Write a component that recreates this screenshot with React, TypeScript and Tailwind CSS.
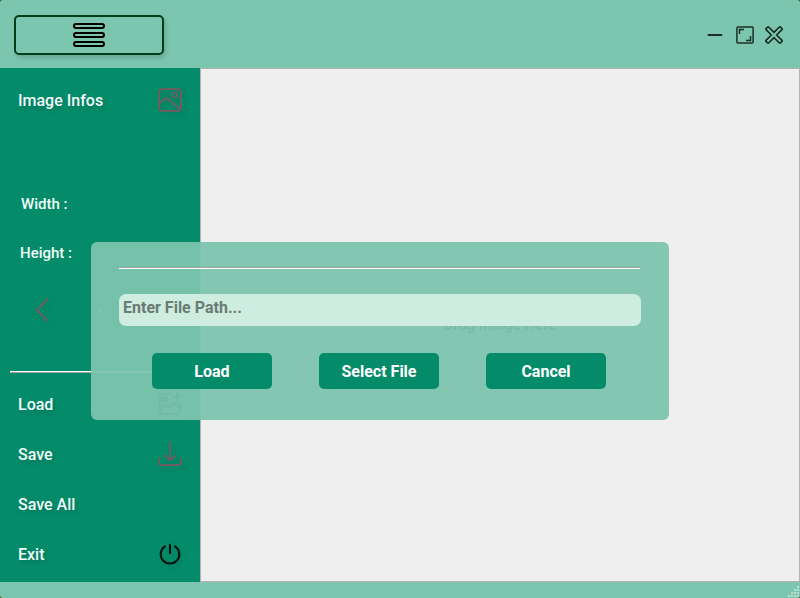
import React from "react";

const iconShadow = "drop-shadow-[2px_3px_3px_rgba(0,0,0,0.12)]";

function MenuIcon() {
  return (
    <svg width="34" height="26" viewBox="0 0 34 26" fill="none" stroke="#000" strokeWidth="2">
      <rect x="2" y="2" width="30" height="4" rx="2" />
      <rect x="2" y="11" width="30" height="4" rx="2" />
      <rect x="2" y="20" width="30" height="4" rx="2" />
    </svg>
  );
}

function PictureIcon() {
  return (
    <svg className={iconShadow} width="26" height="26" viewBox="0 0 26 26" fill="none" stroke="#6c5f62" strokeWidth="2">
      <rect x="2" y="2" width="22" height="22" rx="3.5" />
      <circle cx="17.5" cy="8" r="2.7" strokeWidth="1.8" />
      <path d="M2 17 L7 12.6 Q9.5 10.6 12 12.8 L23.5 22.5" />
    </svg>
  );
}

function AddPictureIcon() {
  return (
    <svg className={iconShadow} width="24" height="24" viewBox="0 0 24 24" fill="none" stroke="#000" strokeWidth="2">
      <path d="M13.5 2 H6 Q2 2 2 6 V18 Q2 22 6 22 H18 Q22 22 22 18 V11" />
      <circle cx="7" cy="7" r="2.2" />
      <path d="M2 17 L6 13.5 Q7.5 12.5 9 14 L11 16 L15 12 Q16.5 10.8 18 12 L22 16 M15 4.5 H23 M19 .5 V8.5" />
    </svg>
  );
}

function DownloadIcon() {
  return (
    <svg className={iconShadow} width="26" height="26" viewBox="0 0 26 26" fill="none" stroke="#6c5f62" strokeWidth="2" strokeLinecap="round">
      <path d="M13 1.5 V19 M7.8 14.7 L13 19.2 L18.2 14.7 M2 17.5 V22 Q2 24 4 24 H22 Q24 24 24 22 V17.5" />
    </svg>
  );
}

function PowerIcon() {
  return (
    <svg className={iconShadow} width="24" height="24" viewBox="0 0 24 24" fill="none" stroke="#03110d" strokeWidth="2.1" strokeLinecap="round">
      <path d="M12 2.7 V11 M7 4.4 A9.3 9.3 0 1 0 17 4.4" />
    </svg>
  );
}

function MenuRow({ label, icon }: { label: string; icon?: React.ReactNode }) {
  return (
    <div className="flex h-[50px] items-center justify-between pl-[18px] text-[16px]">
      <span className="pt-[2px] [text-shadow:2px_3px_4px_rgba(0,0,0,0.15)]">{label}</span>
      <span className="flex w-[60px] items-center justify-center">{icon}</span>
    </div>
  );
}

function Header() {
  return (
    <header className="flex h-[68px] items-start justify-between pl-[14px] pr-[17px] pt-[15px]">
      <button className="flex h-[40px] w-[150px] items-center justify-center rounded-[5px] border-2 border-[#003d1b] bg-[#7cc5ae] shadow-[2px_3px_4px_rgba(0,0,0,0.14)]">
        <MenuIcon />
      </button>
      <div className="flex h-[40px] items-center">
        <svg width="16" height="4" viewBox="0 0 16 4">
          <rect x=".5" y="1" width="15" height="2" rx="1" fill="#1a2d26" />
        </svg>
        <svg className="ml-[13px]" width="18" height="18" viewBox="0 0 18 18" fill="none" stroke="#1c3029" strokeWidth="1.5">
          <rect x=".9" y=".9" width="16.2" height="16.2" rx="1" />
          <path d="M3.5 8 V3.5 H8 M10 14.5 H14.5 V10" />
        </svg>
        <svg className="ml-[11px]" width="18" height="18" viewBox="0 0 18 18">
          <path
            d="M1 2.6 L2.6 1 Q3.1 .5 3.6 1 L9 6.4 L14.4 1 Q14.9 .5 15.4 1 L17 2.6 Q17.5 3.1 17 3.6 L11.6 9 L17 14.4 Q17.5 14.9 17 15.4 L15.4 17 Q14.9 17.5 14.4 17 L9 11.6 L3.6 17 Q3.1 17.5 2.6 17 L1 15.4 Q.5 14.9 1 14.4 L6.4 9 L1 3.6 Q.5 3.1 1 2.6 Z"
            fill="none"
            stroke="#152820"
            strokeWidth="1.5"
          />
        </svg>
      </div>
    </header>
  );
}

function Sidebar() {
  return (
    <aside className="flex w-[200px] shrink-0 flex-col bg-[#048c6a] pt-[7px] font-medium text-[#f2fbf8]">
      <MenuRow label="Image Infos" icon={<PictureIcon />} />
      <div className="flex h-[247px] flex-col pt-[69px] text-[15px] leading-[20px]">
        <div className="pl-[21px]">Width :</div>
        <div className="mt-[29px] pl-[20px]">Height :</div>
        <div className="mt-[35px] flex items-center pl-[34px]">
          <svg className={iconShadow} width="16" height="24" viewBox="0 0 16 24" fill="none" stroke="#6c5f62" strokeWidth="2">
            <path d="M14 .8 L2.5 12 L14 23.2" />
          </svg>
          <span className="ml-[48px]">-</span>
        </div>
      </div>
      <div className="ml-[10px] mr-[10px] mt-[-1px] h-[2px] border-t border-b border-t-white border-b-[#a0a0a0]" />
      <div className="mt-[6px] flex flex-col">
        <MenuRow label="Load" icon={<AddPictureIcon />} />
        <MenuRow label="Save" icon={<DownloadIcon />} />
        <MenuRow label="Save All" />
        <MenuRow label="Exit" icon={<PowerIcon />} />
      </div>
    </aside>
  );
}

function ActionButton({ label }: { label: string }) {
  return (
    <button className="h-[36px] w-[120px] rounded-[5px] bg-[#048c6a] pt-[2px] text-[16px] font-bold text-white">
      {label}
    </button>
  );
}

function FileDialog() {
  return (
    <div className="absolute left-[91px] top-[242px] flex h-[178px] w-[578px] flex-col rounded-[6px] bg-[#7cc5ae]/94 pl-[28px] pr-[28px] pt-[25px]">
      <div className="h-[2px] w-[521px] border-t border-b border-t-[#a0a0a0] border-b-white" />
      <div className="mt-[25px] h-[32px] rounded-[7px] bg-[#d1ede1]/96 pl-[4px] pt-[1px] text-[16px] font-bold leading-[25px] text-[#697c73]">
        Enter File Path...
      </div>
      <div className="ml-[33px] mt-[27px] flex gap-[47px]">
        <ActionButton label="Load" />
        <ActionButton label="Select File" />
        <ActionButton label="Cancel" />
      </div>
    </div>
  );
}

export default function App() {
  return (
    <div className="bg-[#465b20]">
      <div className="relative flex h-[598px] w-[800px] flex-col overflow-hidden rounded-[3px] bg-[#7cc5ae] font-['Roboto',sans-serif]">
        <Header />
        <div className="flex h-[514px]">
          <Sidebar />
          <main className="flex flex-1 items-center justify-center border border-[#b4b4b4] bg-[#efefef] text-[15px] font-medium text-[#003d1b]">
            <span className="pt-px">Drag Image Here</span>
          </main>
        </div>
        <footer className="flex h-[16px] items-end justify-end">
          <svg width="12" height="12" viewBox="0 0 12 12" fill="#b9e0d2">
            <path d="M9 0h2v2h-2z M6 3h2v2h-2z M9 3h2v2h-2z M3 6h2v2h-2z M6 6h2v2h-2z M9 6h2v2h-2z M0 9h2v2h-2z M3 9h2v2h-2z M6 9h2v2h-2z M9 9h2v2h-2z" />
          </svg>
        </footer>
        <FileDialog />
      </div>
    </div>
  );
}
